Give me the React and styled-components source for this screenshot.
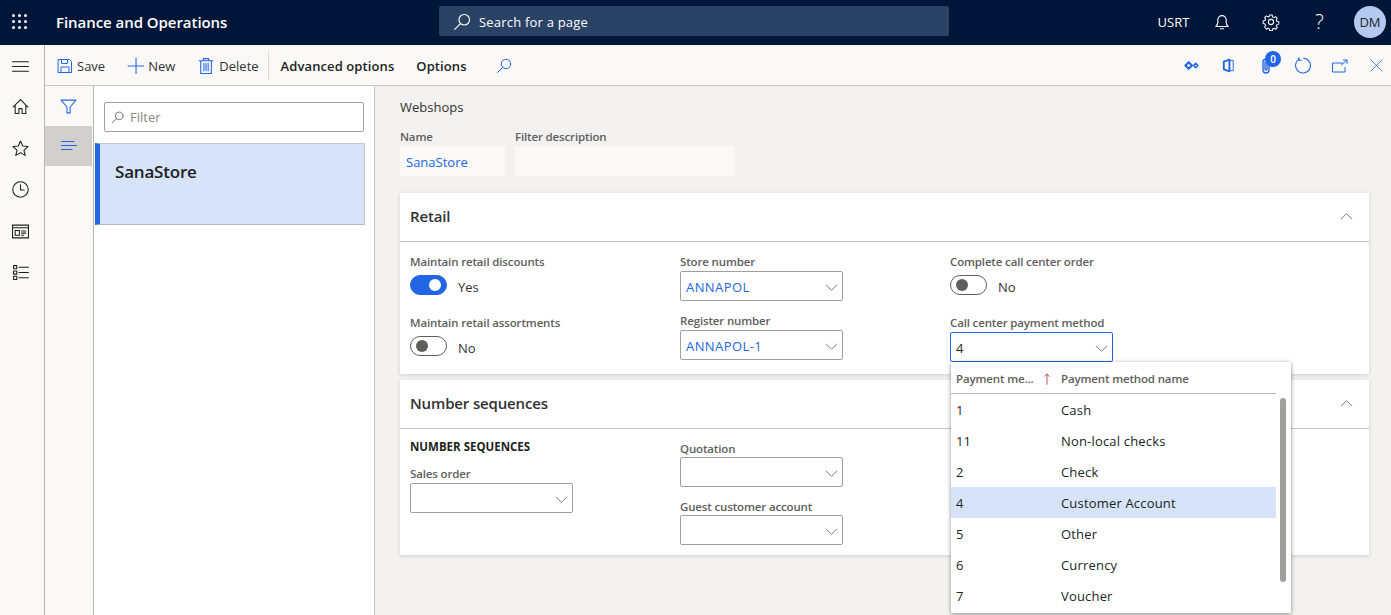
import React from 'react'
import styled, { createGlobalStyle } from 'styled-components'

const Global = createGlobalStyle`
  html, body { margin: 0; padding: 0; height: 100%; overflow: hidden; background: #f3f2f1; }
  body { font-family: "Open Sans", "Noto Sans", "Liberation Sans", sans-serif; font-size: 13px; color: #201f1e; }
  * { box-sizing: border-box; }
  #root { height: 100%; }
`

const Page = styled.div`
  display: flex;
  flex-direction: column;
  width: 1391px;
  height: 615px;
  overflow: hidden;
`

const TopBar = styled.header`
  display: flex;
  align-items: center;
  flex: 0 0 45px;
  padding-bottom: 2px;
  background: #001639;
  color: #fff;
`

const Waffle = styled.div`
  display: grid;
  grid-template-columns: repeat(3, 3px);
  gap: 3px;
  margin-left: 12px;
  span { width: 3px; height: 3px; background: #fff; border-radius: 50%; }
`

const AppTitle = styled.div`
  width: 383px;
  margin-left: 29px;
  font-size: 15px;
  font-weight: 600;
  letter-spacing: -0.05px;
`

const SearchBox = styled.div`
  display: flex;
  align-items: center;
  gap: 8px;
  width: 510px;
  height: 30px;
  margin-bottom: 1px;
  padding: 2px 0 0 14px;
  background: #2a4264;
  border-radius: 2px;
  font-size: 13px;
  letter-spacing: 0.2px;
`

const TopRight = styled.div`
  display: flex;
  align-items: center;
  margin-left: auto;
  padding-right: 5px;
`

const TopIcon = styled.div`
  display: flex;
  align-items: center;
  justify-content: center;
  width: ${p => p.$w || 49}px;
  font-size: ${p => p.$size || 13}px;
  font-weight: ${p => p.$light ? 300 : 400};
`

const Avatar = styled.div`
  display: flex;
  align-items: center;
  justify-content: center;
  width: 32px;
  height: 32px;
  margin-left: 10px;
  border-radius: 50%;
  background: #b4c9f0;
  color: #201f1e;
  font-size: 13px;
`

const Below = styled.div`
  display: flex;
  flex: 1;
  min-height: 0;
`

const NavRail = styled.nav`
  display: flex;
  flex-direction: column;
  align-items: center;
  flex: 0 0 45px;
  padding: 10px 4px 0 0;
  background: #faf9f8;
  border-right: 1px solid #b9b7b5;
`

const NavItem = styled.div`
  display: flex;
  align-items: center;
  justify-content: center;
  width: 100%;
  height: ${p => p.$h || 41.5}px;
  margin-top: ${p => p.$mt || 0}px;
`

const MainCol = styled.div`
  display: flex;
  flex-direction: column;
  flex: 1;
  min-width: 0;
`

const ActionBar = styled.div`
  display: flex;
  align-items: center;
  flex: 0 0 41px;
  padding: 1px 0 0 12px;
  background: #faf9f8;
  border-bottom: 1px solid #c8c6c4;
`

const ActionBtn = styled.div`
  display: flex;
  align-items: center;
  gap: ${p => p.$gap ?? 4}px;
  margin-right: ${p => p.$mr ?? 0}px;
  font-size: 13px;
  letter-spacing: ${p => (p.$strong ? '0.1px' : '0')};
  color: ${p => (p.$strong ? '#201f1e' : '#323130')};
  font-weight: ${p => (p.$strong ? 600 : 400)};
`

const Divider = styled.div`
  width: 1px;
  height: 30px;
  margin: 0 12px 0 9px;
  background: #dcdad8;
`

const ActionRight = styled.div`
  display: flex;
  align-items: center;
  margin-left: auto;
`

const ActionIcon = styled.div`
  position: relative;
  display: flex;
  align-items: center;
  justify-content: center;
  width: ${p => p.$w || 37}px;
  margin-left: ${p => p.$ml || 0}px;
`

const CountBadge = styled.span`
  position: absolute;
  top: -7px;
  left: 18px;
  display: flex;
  align-items: center;
  justify-content: center;
  width: 16px;
  height: 16px;
  border-radius: 50%;
  background: #2266e3;
  color: #fff;
  font-size: 10px;
  font-weight: 600;
`

const Workspace = styled.div`
  display: flex;
  flex: 1;
  min-height: 0;
`

const FilterRail = styled.div`
  flex: 0 0 49px;
  background: #faf9f8;
  border-right: 1px solid #b9b7b5;
`

const RailBtn = styled.div`
  display: flex;
  align-items: center;
  justify-content: center;
  width: 47px;
  height: 40px;
  background: ${p => (p.$active ? '#d2d0ce' : 'transparent')};
`

const ListPane = styled.div`
  flex: 0 0 281px;
  background: #fff;
  border-right: 1px solid #c8c6c4;
`

const FilterBox = styled.div`
  display: flex;
  align-items: center;
  gap: 6px;
  height: 30px;
  margin: 16px 10px 11px 10px;
  padding-left: 6px;
  border: 1px solid #a19f9d;
  border-radius: 2px;
  color: #8a8886;
  font-size: 13px;
`

const ListItem = styled.div`
  height: 82px;
  margin: 0 9px 0 1px;
  padding: 16px 15px;
  background: #d6e3f9;
  border-left: 5px solid #2266e3;
  border-bottom: 1px solid #b9b7b5;
  border-top: 1px solid #c8c6c4;
  border-right: 1px solid #c8c6c4;
  font-size: 17px;
  font-weight: 600;
  color: #201f1e;
  letter-spacing: -0.2px;
`

const Detail = styled.main`
  flex: 1;
  min-width: 0;
  padding: 12px 22px 0 25px;
  background: #f3f2f1;
`

const PageTitle = styled.div`
  font-size: 13px;
  line-height: 18px;
  color: #323130;
`

const HeaderFields = styled.div`
  display: flex;
  gap: 10px;
  margin: 13px 0 17px;
`

const Label = styled.div`
  margin-top: ${p => p.$mt || 0}px;
  font-size: 11.5px;
  line-height: 16px;
  font-weight: 600;
  color: #605e5c;
  letter-spacing: -0.15px;
  white-space: nowrap;
`

const ReadOnly = styled.div`
  display: flex;
  align-items: center;
  width: ${p => p.$w}px;
  height: 30px;
  margin-top: 1px;
  padding: 2px 0 0 6px;
  background: #faf9f8;
  color: #2266e3;
  font-size: 13px;
`

const Card = styled.section`
  height: ${p => p.$h}px;
  margin-bottom: 6px;
  background: #fff;
  box-shadow: 0 1px 4px rgba(0, 0, 0, 0.14);
`

const CardHeader = styled.div`
  display: flex;
  align-items: center;
  justify-content: space-between;
  height: 49px;
  padding: 0 16px 2px 10px;
  border-bottom: 1px solid #c8c6c4;
  font-size: 15px;
  font-weight: 600;
  color: #323130;
  letter-spacing: -0.15px;
`

const CardBody = styled.div`
  display: grid;
  grid-template-columns: 270px 270px 270px;
  padding: ${p => p.$pt}px 0 0 10px;
`

const Col = styled.div`
  display: flex;
  flex-direction: column;
`

const Field = styled.div`
  position: relative;
  margin-top: ${p => p.$mt || 0}px;
  width: 163px;
`

const SelectBox = styled.div`
  display: flex;
  align-items: center;
  justify-content: space-between;
  height: 30px;
  margin-top: ${p => p.$tight ? 0 : 1}px;
  padding: 2px 4px 0 5px;
  background: #fff;
  border: 1px solid ${p => (p.$focus ? '#2266e3' : '#a19f9d')};
  border-radius: 2px;
  color: ${p => (p.$link ? '#2266e3' : '#201f1e')};
  font-size: 13px;
  letter-spacing: ${p => (p.$link ? '0.42px' : '0')};
`

const ToggleRow = styled.div`
  display: flex;
  align-items: center;
  gap: 11px;
  height: 20px;
  margin-top: 5px;
  font-size: 13px;
  color: #323130;
`

const ToggleText = styled.span`
  padding-top: 3px;
`

const ToggleTrack = styled.span`
  display: flex;
  align-items: center;
  justify-content: ${p => (p.$on ? 'flex-end' : 'flex-start')};
  width: 37px;
  height: 20px;
  padding: 0 5px;
  border-radius: 10px;
  background: ${p => (p.$on ? '#2266e3' : '#fff')};
  border: 1px solid ${p => (p.$on ? '#2266e3' : '#605e5c')};
  i { width: 12px; height: 12px; border-radius: 50%; background: ${p => (p.$on ? '#fff' : '#605e5c')}; }
`

const SectionCaps = styled.div`
  font-size: 11.5px;
  line-height: 16px;
  font-weight: 700;
  color: #201f1e;
`

const Dropdown = styled.div`
  position: absolute;
  top: 47px;
  left: 1px;
  z-index: 10;
  width: 340px;
  height: 251px;
  background: #fff;
  border-radius: 1px;
  box-shadow: 0 1px 4px rgba(0, 0, 0, 0.45);
`

const DropHeader = styled.div`
  display: grid;
  grid-template-columns: 105px 1fr;
  align-items: center;
  width: 325px;
  height: 32px;
  padding: 2px 0 0 5px;
  border-bottom: 1px solid #b9b7b5;
  font-size: 11.5px;
  font-weight: 600;
  color: #605e5c;
  letter-spacing: -0.15px;
  white-space: nowrap;
`

const SortCell = styled.div`
  display: flex;
  align-items: center;
  justify-content: space-between;
  padding-right: 8px;
`

const DropRow = styled.div`
  display: grid;
  grid-template-columns: 105px 1fr;
  align-items: center;
  width: 325px;
  height: 31px;
  padding-left: 5px;
  background: ${p => (p.$active ? '#d6e3f9' : 'transparent')};
  font-size: 13px;
  color: #201f1e;
  letter-spacing: 0.18px;
`

const ScrollThumb = styled.div`
  position: absolute;
  top: 36px;
  right: 5px;
  width: 6px;
  height: 184px;
  border-radius: 3px;
  background: #a19f9d;
`

const line = { fill: 'none', stroke: 'currentColor', strokeWidth: 1, strokeLinecap: 'round', strokeLinejoin: 'round' }

const Svg = ({ size = 16, color = '#2266e3', children }) => (
  <svg width={size} height={size} viewBox="0 0 16 16" style={{ color, flex: 'none', display: 'block' }} {...line}>
    {children}
  </svg>
)

const Magnifier = ({ size = 16, color }) => (
  <Svg size={size} color={color}>
    <circle cx="10" cy="6" r="4.7" />
    <path d="M6.6 9.4 1.5 14.5" />
  </Svg>
)

const Chevron = ({ up, color = '#605e5c' }) => (
  <Svg size={13} color={color}>
    <path d={up ? 'M1.5 11 8 4.500 14.500 11' : 'M1.500 5 8 11.500 14.500 5'} />
  </Svg>
)

const BLUE = '#2266e3'
const DARK = '#201f1e'

const options = [
  ['1', 'Cash'],
  ['11', 'Non-local checks'],
  ['2', 'Check'],
  ['4', 'Customer Account', true],
  ['5', 'Other'],
  ['6', 'Currency'],
  ['7', 'Voucher'],
]

export default function App() {
  return (
    <Page>
      <Global />
      <TopBar>
        <Waffle>{Array.from({ length: 9 }).map((_, i) => <span key={i} />)}</Waffle>
        <AppTitle>Finance and Operations</AppTitle>
        <SearchBox>
          <Magnifier size={18} color="#fff" />
          Search for a page
        </SearchBox>
        <TopRight>
          <TopIcon $w={47}>USRT</TopIcon>
          <TopIcon>
            <Svg size={18} color="#fff">
              <path d="M2.500 12h11c-1.200-1-1.800-2-1.800-3.800V6a3.700 3.700 0 0 0-7.400 0v2.200C4.300 10 3.700 11 2.500 12Z" />
              <path d="M6.500 14h3" />
            </Svg>
          </TopIcon>
          <TopIcon>
            <Svg size={18} color="#fff">
              <circle cx="8" cy="8" r="2.300" />
              <path d="M6.800 1.200h2.400l.4 1.900 1.300.6 1.700-1 1.600 1.700-1 1.600.6 1.300 1.900.5v2.300l-1.900.5-.6 1.300 1 1.700-1.600 1.600-1.700-1-1.300.6-.4 1.900H6.800l-.5-1.900-1.300-.6-1.600 1L1.700 12.900l1-1.700-.6-1.300-1.900-.5V7.100l1.900-.5.6-1.300-1-1.600 1.700-1.700 1.600 1 1.300-.6z" transform="translate(.8 .8) scale(.9)" />
            </Svg>
          </TopIcon>
          <TopIcon $size={20} $light>?</TopIcon>
          <Avatar>DM</Avatar>
        </TopRight>
      </TopBar>
      <Below>
        <NavRail>
          <NavItem $h={22}>
            <Svg size={17} color={DARK}><path d="M.5 3.500h15M.5 8h15M.5 12.500h15" /></Svg>
          </NavItem>
          <NavItem $mt={9}>
            <Svg size={17} color={DARK}><path d="M1 8.500 8 1.500l7 7M3 7v7.500h3.500V10h3v4.500H13V7" /></Svg>
          </NavItem>
          <NavItem>
            <Svg size={17} color={DARK}><path d="m8 1 2.100 4.700 5 .5-3.800 3.300 1.100 5L8 11.900l-4.400 2.600 1.100-5L.9 6.200l5-.5z" /></Svg>
          </NavItem>
          <NavItem>
            <Svg size={17} color={DARK}><circle cx="8" cy="8" r="7.300" /><path d="M8 3.500V8.500h3.500" /></Svg>
          </NavItem>
          <NavItem>
            <Svg size={17} color={DARK}><path d="M.5 2h15v12H.5zM.5 4.500h15M3 7h4v4.500H3zM9 7.500h4M9 9.500h4M9 11.500h2" /></Svg>
          </NavItem>
          <NavItem>
            <Svg size={17} color={DARK}><path d="M1.500 1.500h3v3h-3zM1.500 6.500h3v3h-3zM1.500 11.500h3v3h-3zM6.500 3h9M6.500 8h9M6.500 13h9" /></Svg>
          </NavItem>
        </NavRail>
        <MainCol>
          <ActionBar>
            <ActionBtn $mr={22}>
              <Svg><path d="M1.500 1.500h11l2 2v11h-13zM4.500 1.500v4h6v-4M4 14.500V9h8v5.500" /></Svg>
              Save
            </ActionBtn>
            <ActionBtn $mr={22} $gap={4}>
              <Svg size={17}><path d="M8.500 1v15M1 8.500h15" /></Svg>
              New
            </ActionBtn>
            <ActionBtn $gap={5}>
              <Svg size={17}><path d="M2 3.500h13M6 3.500V1.500h5v2M3.500 3.500v12h10v-12M6.500 6v7M8.500 6v7M10.500 6v7" /></Svg>
              Delete
            </ActionBtn>
            <Divider />
            <ActionBtn $strong $mr={22}>Advanced options</ActionBtn>
            <ActionBtn $strong $mr={29}>Options</ActionBtn>
            <Magnifier size={16} color={BLUE} />
            <ActionRight>
              <ActionIcon>
                <Svg size={15}>
                  <path d="M5 4.500 8.500 8 5 11.500 1.500 8z" strokeWidth="2.200" />
                  <path d="M12.500 5.700 14.800 8l-2.300 2.300L10.200 8z" strokeWidth="1.600" />
                </Svg>
              </ActionIcon>
              <ActionIcon>
                <Svg size={15}>
                  <path d="M3 3.800 9 1.800v12.400l-6-2z" strokeWidth="2" />
                  <path d="M9.500 2.500h3.500v11H9.500" strokeWidth="1" />
                </Svg>
              </ActionIcon>
              <ActionIcon>
                <Svg size={16}><path d="M11 4v8a3 3 0 0 1-6 0V3.500a2 2 0 0 1 4 0V11a1 1 0 0 1-2 0V4" strokeWidth="1.400" /></Svg>
                <CountBadge>0</CountBadge>
              </ActionIcon>
              <ActionIcon>
                <Svg size={17}><path d="M5 2A7 7 0 1 0 9 1.100M4.500 .5V3H7" /></Svg>
              </ActionIcon>
              <ActionIcon>
                <Svg size={16}><path d="M10.500 5H.5v9h12.500V9.500M9.500 7 15 2M11.500 2H15v3.500" /></Svg>
              </ActionIcon>
              <ActionIcon $w={30} $ml={3}>
                <Svg size={13}><path d="M1 1l14 14M15 1 1 15" /></Svg>
              </ActionIcon>
            </ActionRight>
          </ActionBar>
          <Workspace>
            <FilterRail>
              <RailBtn>
                <Svg size={17}><path d="M1 2h14L9.500 8.500V14h-3V8.500z" /></Svg>
              </RailBtn>
              <RailBtn $active>
                <Svg size={16} color={BLUE}><path d="M.5 3.500h12.500M.5 7.500h15.500M.5 11.500h10.500" /></Svg>
              </RailBtn>
            </FilterRail>
            <ListPane>
              <FilterBox>
                <Magnifier size={13} color="#605e5c" />
                Filter
              </FilterBox>
              <ListItem>SanaStore</ListItem>
            </ListPane>
            <Detail>
              <PageTitle>Webshops</PageTitle>
              <HeaderFields>
                <div>
                  <Label>Name</Label>
                  <ReadOnly $w={105}>SanaStore</ReadOnly>
                </div>
                <div>
                  <Label>Filter description</Label>
                  <ReadOnly $w={220} />
                </div>
              </HeaderFields>
              <Card $h={181}>
                <CardHeader>Retail<Chevron up /></CardHeader>
                <CardBody $pt={12}>
                  <Col>
                    <Label>Maintain retail discounts</Label>
                    <ToggleRow>
                      <ToggleTrack $on><i /></ToggleTrack>
                      <ToggleText>Yes</ToggleText>
                    </ToggleRow>
                    <Label $mt={20}>Maintain retail assortments</Label>
                    <ToggleRow>
                      <ToggleTrack><i /></ToggleTrack>
                      <ToggleText>No</ToggleText>
                    </ToggleRow>
                  </Col>
                  <Col>
                    <Field>
                      <Label>Store number</Label>
                      <SelectBox $link>ANNAPOL<Chevron /></SelectBox>
                    </Field>
                    <Field $mt={12}>
                      <Label>Register number</Label>
                      <SelectBox $link>ANNAPOL-1<Chevron /></SelectBox>
                    </Field>
                  </Col>
                  <Col>
                    <Label>Complete call center order</Label>
                    <ToggleRow>
                      <ToggleTrack><i /></ToggleTrack>
                      <ToggleText>No</ToggleText>
                    </ToggleRow>
                    <Field $mt={20}>
                      <Label>Call center payment method</Label>
                      <SelectBox $focus>4<Chevron /></SelectBox>
                      <Dropdown>
                        <DropHeader>
                          <SortCell>
                            Payment me...
                            <Svg size={12} color="#a4262c"><path d="M8 15V1.500M5 4.500l3-3 3 3" /></Svg>
                          </SortCell>
                          <span>Payment method name</span>
                        </DropHeader>
                        {options.map(([id, name, active]) => (
                          <DropRow key={id} $active={active}>
                            <span>{id}</span>
                            <span>{name}</span>
                          </DropRow>
                        ))}
                        <ScrollThumb />
                      </Dropdown>
                    </Field>
                  </Col>
                </CardBody>
              </Card>
              <Card $h={175}>
                <CardHeader>Number sequences<Chevron up /></CardHeader>
                <CardBody $pt={10}>
                  <Col>
                    <SectionCaps>NUMBER SEQUENCES</SectionCaps>
                    <Field $mt={11}>
                      <Label>Sales order</Label>
                      <SelectBox><span /><Chevron /></SelectBox>
                    </Field>
                  </Col>
                  <Col>
                    <Field $mt={2}>
                      <Label>Quotation</Label>
                      <SelectBox $tight><span /><Chevron /></SelectBox>
                    </Field>
                    <Field $mt={12}>
                      <Label>Guest customer account</Label>
                      <SelectBox $tight><span /><Chevron /></SelectBox>
                    </Field>
                  </Col>
                </CardBody>
              </Card>
            </Detail>
          </Workspace>
        </MainCol>
      </Below>
    </Page>
  )
}
